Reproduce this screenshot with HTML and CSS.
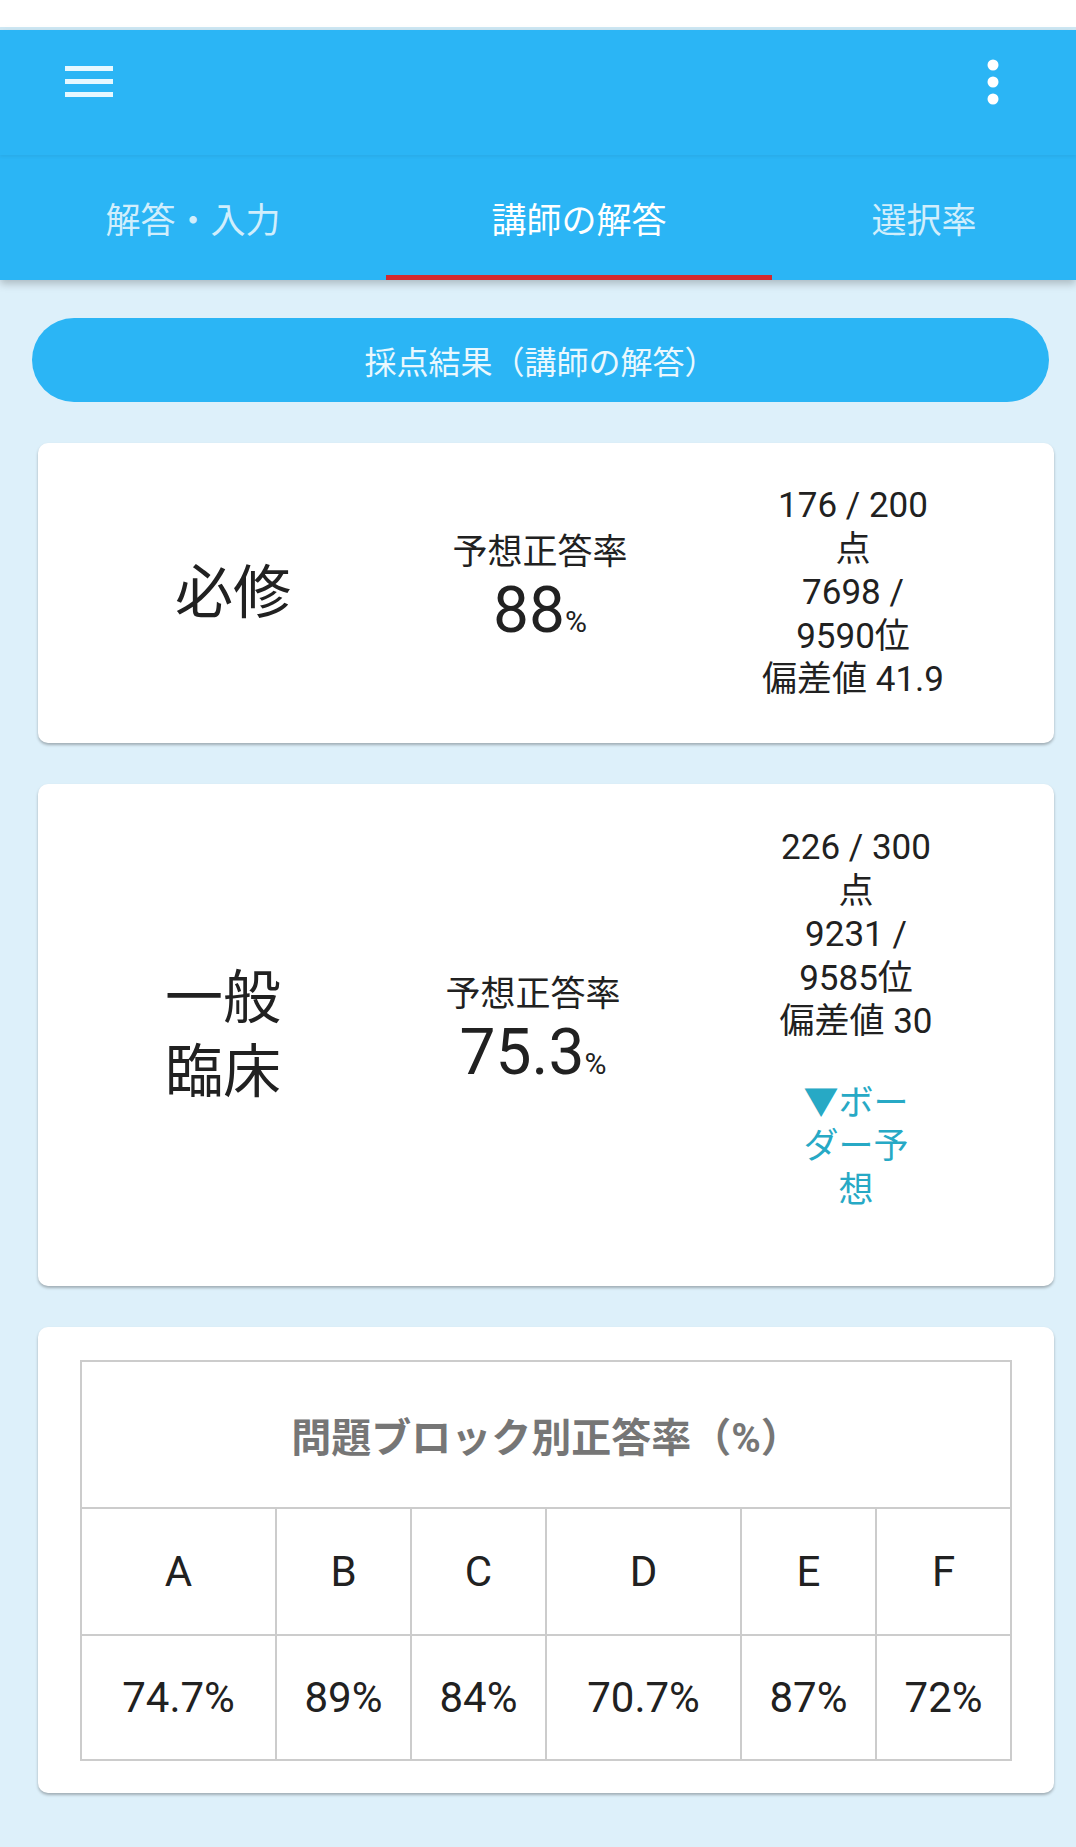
FILE: index.html
```html
<!DOCTYPE html>
<html lang="ja">
<head>
    <meta charset="utf-8">
    <title>講師の解答</title>
    <link rel="stylesheet" href="styles.css">
</head>
<body>
    <div class="status-bar"></div>

    <header class="app-bar">
        <div class="toolbar">
            <svg class="menu-icon" width="48" height="31" viewBox="0 0 48 31">
                <rect x="0" y="0" width="48" height="5" fill="#e6f8ff"/>
                <rect x="0" y="13" width="48" height="5" fill="#e6f8ff"/>
                <rect x="0" y="26" width="48" height="5" fill="#e6f8ff"/>
            </svg>
            <svg class="more-icon" width="12" height="46" viewBox="0 0 12 46">
                <circle cx="6" cy="6" r="5.5" fill="#ffffff"/>
                <circle cx="6" cy="23" r="5.5" fill="#ffffff"/>
                <circle cx="6" cy="40" r="5.5" fill="#ffffff"/>
            </svg>
        </div>
        <nav class="tabs">
            <div class="tab">解答・入力</div>
            <div class="tab tab-active">講師の解答</div>
            <div class="tab">選択率</div>
        </nav>
    </header>

    <main class="content">
        <button class="result-button">採点結果（講師の解答）</button>

        <!-- 必修 -->
        <section class="score-card score-card-hisshu">
            <div class="subject">必修</div>
            <div class="rate">
                <div class="rate-label">予想正答率</div>
                <div class="rate-value">88<span class="rate-unit">%</span></div>
            </div>
            <div class="stats-col">
                <div class="stats">
                    <div>176 / 200 点</div>
                    <div>7698 / <span class="nobr">9590位</span></div>
                    <div>偏差値 41.9</div>
                </div>
            </div>
        </section>

        <!-- 一般臨床 -->
        <section class="score-card score-card-ippan">
            <div class="subject">一般<br>臨床</div>
            <div class="rate">
                <div class="rate-label">予想正答率</div>
                <div class="rate-value">75.3<span class="rate-unit">%</span></div>
            </div>
            <div class="stats-col">
                <div class="stats">
                    <div>226 / 300 点</div>
                    <div>9231 / <span class="nobr">9585位</span></div>
                    <div>偏差値 30</div>
                </div>
                <div class="border-link">▼ボーダー予想</div>
            </div>
        </section>

        <!-- ブロック別 -->
        <section class="block-card">
            <table class="block-table">
                <colgroup>
                    <col class="col-wide">
                    <col class="col-narrow">
                    <col class="col-narrow">
                    <col class="col-wide">
                    <col class="col-narrow">
                    <col class="col-narrow">
                </colgroup>
                <tr>
                    <th colspan="6">問題ブロック別正答率（%）</th>
                </tr>
                <tr class="letters">
                    <td>A</td><td>B</td><td>C</td><td>D</td><td>E</td><td>F</td>
                </tr>
                <tr class="values">
                    <td>74.7%</td><td>89%</td><td>84%</td><td>70.7%</td><td>87%</td><td>72%</td>
                </tr>
            </table>
        </section>
    </main>
</body>
</html>
```

FILE: styles.css
```css
body {
    margin: 0;
    background: #ddf0fa;
    font-family: Roboto, "Noto Sans CJK JP", sans-serif;
    color: #212121;
    min-height: 1847px;
}
.status-bar {
    height: 27px;
    background: #ffffff;
    border-bottom: 3px solid #cfe9f5;
}
.app-bar {
    background: #2bb5f5;
    box-shadow: 0 4px 8px rgba(0,0,0,0.22);
    position: relative;
}
.toolbar {
    height: 125px;
    display: flex;
    justify-content: space-between;
    align-items: flex-start;
    padding: 0 77px 0 65px;
    box-shadow: 0 2px 3px rgba(0,0,0,0.05);
}
.menu-icon {
    margin-top: 36px;
}
.more-icon {
    margin-top: 29px;
}
.tabs {
    height: 125px;
    display: grid;
    grid-template-columns: 386px 386px 1fr;
}
.tab {
    display: flex;
    align-items: center;
    justify-content: center;
    font-size: 35px;
    color: rgba(255,255,255,0.78);
    border-top: 5px solid transparent;
    border-bottom: 5px solid transparent;
}
.tab-active {
    color: #ffffff;
    border-bottom-color: #d32a2e;
}
.content {
    padding-top: 38px;
}
.result-button {
    display: block;
    width: 1017px;
    height: 84px;
    margin: 0 0 0 32px;
    border: none;
    border-radius: 42px;
    background: #2bb5f5;
    color: #eaf8fe;
    font-family: Roboto, "Noto Sans CJK JP", sans-serif;
    font-size: 32px;
    padding: 0;
}
.score-card {
    margin: 41px 0 0 38px;
    width: 1016px;
    background: #ffffff;
    border-radius: 10px;
    box-shadow: 0 2px 3px rgba(0,0,0,0.28);
    display: grid;
    align-items: center;
    padding: 41px 0;
    box-sizing: border-box;
}
.score-card-hisshu {
    grid-template-columns: 390px 224px 1fr;
    height: 300px;
}
.score-card-ippan {
    grid-template-columns: 370px 250px 1fr;
    height: 502px;
}
.subject {
    text-align: center;
    font-size: 58px;
    line-height: 74px;
}
.rate {
    text-align: center;
}
.rate-label {
    font-size: 35px;
    line-height: 46px;
}
.rate-value {
    font-size: 64px;
    line-height: 70px;
}
.rate-unit {
    font-size: 30px;
}
.stats-col {
    text-align: center;
}
.stats {
    width: 190px;
    margin: 0 auto;
    font-size: 35px;
    line-height: 43.5px;
}
.nobr {
    white-space: nowrap;
}
.border-link {
    width: 120px;
    margin: 38px auto 32px;
    font-size: 35px;
    line-height: 43.5px;
    color: #27a9c5;
}
.block-card {
    margin: 41px 0 0 38px;
    width: 1016px;
    background: #ffffff;
    border-radius: 10px;
    box-shadow: 0 2px 3px rgba(0,0,0,0.28);
    padding: 33px 43px 32px 42px;
    box-sizing: border-box;
}
.block-table {
    width: 931px;
    border-collapse: collapse;
    table-layout: fixed;
}
.col-wide {
    width: 195px;
}
.col-narrow {
    width: 135px;
}
.block-table th,
.block-table td {
    border: 2px solid #cccccc;
    text-align: center;
    padding: 0;
}
.block-table th {
    height: 145px;
    font-size: 40px;
    font-weight: bold;
    color: #767676;
}
.block-table td {
    font-size: 42px;
}
.letters td {
    height: 125px;
}
.values td {
    height: 123px;
}
```
